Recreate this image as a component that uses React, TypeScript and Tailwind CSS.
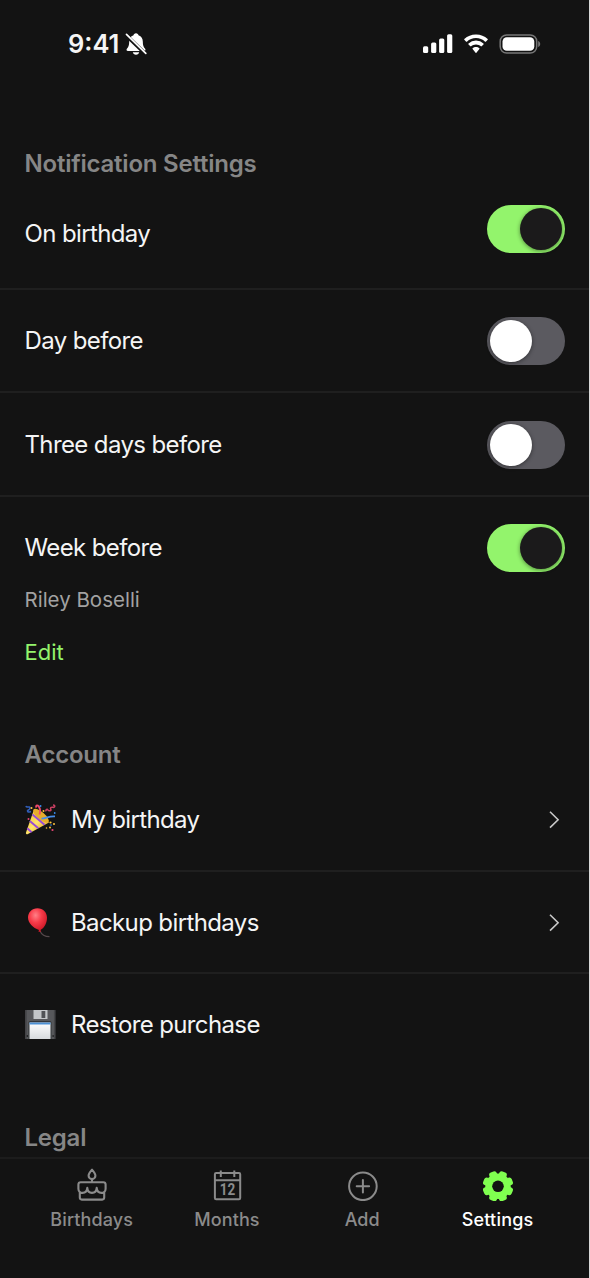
import { useState } from "react";
import type { ReactNode } from "react";

function StatusBar() {
  return (
    <header className="flex h-[88px] shrink-0 items-center justify-between pl-[68px] pr-[48px]">
      <div className="flex items-center gap-[4px]">
        <span className="w-[53px] whitespace-nowrap text-[25.500px] leading-[30px] font-semibold">9:41</span>
        <svg width="22" height="24" viewBox="0 0 22 24">
          <path d="M11 1.200c-1.500 0-2.300 1-2.500 2C5.500 4.200 4.200 6.500 4.200 9.500c0 4-.8 5.600-2.300 7.200-.8.900-.3 2.300 1 2.300h16.200c1.300 0 1.800-1.400 1-2.300-1.500-1.600-2.300-3.200-2.300-7.200 0-3-1.300-5.300-4.300-6.300-.2-1-1-2-2.500-2zM7.800 20.300h6.400c-.3 1.500-1.500 2.500-3.200 2.500s-2.900-1-3.200-2.500z" fill="#fff" />
          <path d="M1 3 20.500 22" stroke="#131313" strokeWidth="3.800" />
          <path d="M1.500 2.300 20.800 21.300" stroke="#fff" strokeWidth="1.700" strokeLinecap="round" />
        </svg>
      </div>
      <div className="flex items-center">
        <svg width="30" height="20" viewBox="0 0 30 20" fill="#fff">
          <rect x="0" y="12.200" width="5.200" height="6.800" rx="1.500" />
          <rect x="8.100" y="8.500" width="5.200" height="10.500" rx="1.500" />
          <rect x="16.100" y="4.500" width="5.200" height="14.500" rx="1.500" />
          <rect x="24.100" y="0.300" width="5.200" height="18.700" rx="1.500" />
        </svg>
        <svg className="ml-[10px]" width="26" height="20" viewBox="0 0 26 20" fill="#fff">
          <path d="M13 4.100c3.500 0 6.700 1.300 9.100 3.600.2.200.5.200.7 0l1.900-1.900c.2-.2.200-.6 0-.8A17 17 0 0 0 13 .5 17 17 0 0 0 1.300 5c-.2.200-.2.600 0 .8l1.900 1.900c.2.200.5.200.7 0A13.200 13.200 0 0 1 13 4.100z" />
          <path d="M13 10.400c1.900 0 3.600.7 4.900 1.900.2.200.5.200.7 0l1.900-1.900c.2-.2.200-.6 0-.8a10.900 10.900 0 0 0-15 0c-.2.200-.2.600 0 .8l1.900 1.900c.2.200.5.200.7 0 1.300-1.200 3-1.900 4.900-1.900z" />
          <path d="M13 12.900c-1.300 0-2.500.5-3.400 1.300-.2.200-.2.500 0 .700l3 3.900c.2.300.6.300.8 0l3-3.900c.2-.2.200-.5 0-.7-.9-.8-2.100-1.300-3.400-1.300z" />
        </svg>
        <svg className="ml-[10px]" width="42" height="20" viewBox="0 0 42 20">
          <rect x="1.200" y=".9" width="36.500" height="18.200" rx="6.500" fill="none" stroke="#777" strokeWidth="1.500" />
          <rect x="3.500" y="3.200" width="31.800" height="13.600" rx="4.300" fill="#fff" />
          <path d="M39.200 7v6c1.300-.5 2-1.600 2-3s-.7-2.500-2-3z" fill="#777" />
        </svg>
      </div>
    </header>
  );
}

function Switch({ label, initial }: { label: string; initial: boolean }) {
  const [on, setOn] = useState(initial);
  return (
    <button
      role="switch"
      aria-checked={on}
      aria-label={label}
      onClick={() => setOn(!on)}
      className={`flex h-[48px] w-[78px] items-center rounded-full px-[3px] ${on ? "justify-end bg-[#93f46c]" : "justify-start bg-[#5b5a60]"}`}
    >
      <span
        className={`size-[42px] rounded-full shadow-[0_1px_4px_rgba(0,0,0,0.45)] ${on ? "bg-[#1b1a1b]" : "bg-white"}`}
      />
    </button>
  );
}

function Heading({ children }: { children: ReactNode }) {
  return (
    <h2 className="px-[24.500px] text-[24px] leading-[32px] font-semibold tracking-[-0.22px] text-[#868686]">{children}</h2>
  );
}

function RowLabel({ children }: { children: ReactNode }) {
  return <span className="block text-[24px] leading-[30px] tracking-[-0.62px]">{children}</span>;
}

function AccountRow({ icon, label, arrow }: { icon: ReactNode; label: string; arrow?: boolean }) {
  return (
    <div className="flex items-center pr-[29px] pl-[24px]">
      <span className="flex h-[34px] w-[47px] items-center">{icon}</span>
      <RowLabel>{label}</RowLabel>
      {arrow && (
        <svg className="ml-auto" width="12" height="20" viewBox="0 0 12 20" fill="none">
          <path d="M2 1.800 10.100 9.700 2 17.600" stroke="#c8c8c8" strokeWidth="1.600" />
        </svg>
      )}
    </div>
  );
}

const Popper = () => (
  <svg width="33" height="34" viewBox="0 0 33 34">
    <defs>
      <linearGradient id="cone" x1="0" y1="0" x2="1" y2="1">
        <stop offset="0" stopColor="#f2b72c" />
        <stop offset=".5" stopColor="#ffe46a" />
        <stop offset="1" stopColor="#d48a18" />
      </linearGradient>
    </defs>
    <path d="M10 6.500 2 29.500c-.4 1.500.8 2.100 2 1.600l21-11.600z" fill="url(#cone)" />
    <ellipse cx="17" cy="12.800" rx="3.800" ry="9.800" transform="rotate(-49 17 12.800)" fill="#e6ac2b" />
    <path d="m8.500 11.500 12 10.300M5.800 18l8.500 7.200M3.300 25.200l4.300 4" stroke="#984bd5" strokeWidth="1.900" />
    <path d="M15.500 11.500c1-3.500.8-7-1.700-9-1.600-.7-2.300 1-1.200 2" stroke="#f0486c" strokeWidth="1.800" fill="none" />
    <path d="M17.500 15.700c4.500-.2 7-2.700 13.500-2.300" stroke="#478de9" strokeWidth="1.800" fill="none" />
    <path d="M2 3c.4 2.500 4-.5 4 2s-3.500 1.500-2.200 3.600c1 1 2 .2 3.200-.2" stroke="#315fba" strokeWidth="1.600" fill="none" />
    <path d="M29 2c2.500 0 2 2.700 0 2.300s-3 .3-2.200 2-2 2-3 .6-2.300 0-1.700 1.500" stroke="#ca3f62" strokeWidth="1.600" fill="none" />
    <g fill="#ffc43e">
      <circle cx="7.500" cy="5" r="1" /><circle cx="19.500" cy="8" r="1" /><circle cx="26.500" cy="19.500" r="1.100" /><circle cx="30" cy="21" r="1" /><circle cx="26" cy="24.500" r="1" /><circle cx="22.500" cy="25" r=".8" />
    </g>
    <g fill="#368bf0"><circle cx="16.500" cy="3" r="1" /><circle cx="30.700" cy="10" r=".9" /><circle cx="27" cy="22" r=".8" /></g>
    <g fill="#e64473"><circle cx="4.500" cy="16" r="1" /><circle cx="28.500" cy="27" r="1.100" /></g>
  </svg>
);

const Balloon = () => (
  <svg width="33" height="34" viewBox="0 0 33 34">
    <defs>
      <radialGradient id="balloon" cx=".4" cy=".3" r=".7">
        <stop offset="0" stopColor="#ff8087" />
        <stop offset=".45" stopColor="#f83b49" />
        <stop offset="1" stopColor="#cc1726" />
      </radialGradient>
    </defs>
    <path d="M16 25c1.500 3.500 5 5.700 9.500 5.700" fill="none" stroke="#54494b" strokeWidth="1.200" />
    <path d="M13.500 2.300C8 2.300 4 6.400 4 11.600c0 5.300 5 10.500 11 12.500l-.6 1.600h2.700l-.6-1.800C20.500 21.900 23 16.700 23 11.700 23 6.300 19 2.300 13.500 2.300z" fill="url(#balloon)" />
  </svg>
);

const Floppy = () => (
  <svg width="33" height="34" viewBox="0 0 33 34">
    <defs>
      <linearGradient id="paper" x1="0" y1="0" x2="0" y2="1">
        <stop offset="0" stopColor="#fff" />
        <stop offset="1" stopColor="#d8dbde" />
      </linearGradient>
    </defs>
    <path d="M1.300 2h30v29H1.300z" fill="#57585b" />
    <path d="M2 2v29M30.600 2v29" stroke="#444548" strokeWidth="1.400" />
    <path d="M9.500 2h14v9h-14z" fill="#c3c6c8" />
    <path d="M17.500 3h3.800v7h-3.800z" fill="#505255" />
    <path d="M4.500 31V14.500q0-1.500 1.500-1.500h20q1.500 0 1.500 1.500V31z" fill="#333639" />
    <path d="M5.500 14.500h21V31h-21z" fill="url(#paper)" />
    <path d="M5.500 14.500h21v2h-21z" fill="#4c91d4" />
    <path d="M2.700 27H4v2H2.700zM28.500 27h1.300v2h-1.300z" fill="#242526" />
  </svg>
);

const CakeIcon = () => (
  <svg width="32" height="34" viewBox="0 0 32 34" fill="none" stroke="currentColor" strokeWidth="2.100" strokeLinejoin="round">
    <path d="M16 2.700c-2 2.200-3.400 3.800-3.400 6a3.400 3.400 0 0 0 6.800 0c0-2.200-1.400-3.800-3.400-6zM16 12v3" />
    <path d="M2.400 21.700v-4.200q0-2.300 2.300-2.300h22.600q2.300 0 2.300 2.300v4.200c0 2.300-1.700 4.200-4.200 4.200s-4.400-1.700-4.700-5c-.2 3.300-2.200 5-4.700 5s-4.500-1.700-4.700-5c-.3 3.300-2.200 5-4.700 5s-4.200-1.900-4.200-4.200zM3.800 25v5.600q0 2 2 2h20.400q2 0 2-2V25" />
  </svg>
);

const CalendarIcon = () => (
  <svg width="32" height="34" viewBox="0 0 32 34" fill="none" stroke="currentColor" strokeWidth="2">
    <rect x="3.900" y="6" width="25.300" height="26.300" rx="1.200" />
    <path d="M3.900 13.300h25.300M9.800 3.400V10M23.300 3.400V10" />
    <text x="16.600" y="28" textAnchor="middle" fill="currentColor" stroke="none" fontSize="16" fontWeight="700" fontFamily="Roboto, sans-serif" textLength="15.500" lengthAdjust="spacingAndGlyphs">12</text>
  </svg>
);

const AddIcon = () => (
  <svg width="32" height="34" viewBox="0 0 32 34" fill="none" stroke="currentColor" strokeWidth="2">
    <circle cx="16.900" cy="19.300" r="13.800" />
    <path d="M10.700 19.300h12.400M16.900 13.100v12.400" strokeLinecap="round" />
  </svg>
);

const GearIcon = () => (
  <svg width="32" height="34" viewBox="0 0 32 34" fill="#80ff50">
    <defs>
      <mask id="gear-hole">
        <path fill="#fff" d="M0 0h34v36H0z" />
        <circle cx="16" cy="19.300" r="5.800" fill="#000" />
      </mask>
    </defs>
    <g mask="url(#gear-hole)">
      <circle cx="16" cy="19.300" r="12.700" />
      {[22.5, 67.5, 112.5, 157.5, 202.5, 247.5, 292.5, 337.5].map((a) => (
        <rect key={a} x="12" y="3.900" width="8" height="9" rx="2.600" transform={`rotate(${a} 16 19.300)`} />
      ))}
    </g>
  </svg>
);

function Tab({ icon, label, active }: { icon: ReactNode; label: string; active?: boolean }) {
  return (
    <button className={`flex w-[135.300px] flex-col items-center ${active ? "text-white" : "text-[#8b8b8b]"}`}>
      {icon}
      <span className={`mt-[7px] text-[18px] leading-[24px] font-medium ${active ? "tracking-[0.2px]" : "tracking-[0.1px]"}`}>{label}</span>
    </button>
  );
}

export default function App() {
  return (
    <div className="flex h-[1278px] w-[590px] flex-col overflow-hidden border-r border-[#d8d8d8] bg-[#131313] font-['Inter','Liberation_Sans',sans-serif] text-[#f5f5f5]">
      <StatusBar />
      <main className="h-[1069px] shrink-0 overflow-hidden pt-[60px]">
        <Heading>Notification Settings</Heading>
        <div className="flex h-[110px] justify-between border-b-2 border-[#1f1f1f] pt-[24.500px] pr-[24px] pl-[24.500px]">
          <div className="pt-[14px]"><RowLabel>On birthday</RowLabel></div>
          <Switch label="On birthday" initial />
        </div>
        <div className="flex h-[103px] items-center justify-between border-b-2 border-[#1f1f1f] pt-px pr-[24px] pl-[24.500px]">
          <RowLabel>Day before</RowLabel>
          <Switch label="Day before" initial={false} />
        </div>
        <div className="flex h-[104px] items-center justify-between border-b-2 border-[#1f1f1f] pt-px pr-[24px] pl-[24.500px]">
          <RowLabel>Three days before</RowLabel>
          <Switch label="Three days before" initial={false} />
        </div>
        <div className="flex h-[242px] flex-col pt-[27px] pr-[24px] pl-[24.500px]">
          <div className="flex h-[48px] items-center justify-between">
            <RowLabel>Week before</RowLabel>
            <Switch label="Week before" initial />
          </div>
          <span className="mt-[15px] text-[20.500px] leading-[26px] text-[#a2a2a2]">Riley Boselli</span>
          <button className="mt-[25px] self-start text-[22px] leading-[28px] text-[#93f46c]">Edit</button>
        </div>
        <Heading>Account</Heading>
        <div className="h-[101px] border-b-2 border-[#1f1f1f] pt-[32px]">
          <AccountRow icon={<Popper />} label="My birthday" arrow />
        </div>
        <div className="h-[102px] border-b-2 border-[#1f1f1f] pt-[34px]">
          <AccountRow icon={<Balloon />} label="Backup birthdays" arrow />
        </div>
        <div className="h-[148px] pt-[34px]">
          <AccountRow icon={<Floppy />} label="Restore purchase" />
        </div>
        <Heading>Legal</Heading>
      </main>
      <nav className="flex h-[121px] shrink-0 items-start border-t-2 border-[#1c1c1c] pt-[8px] pl-[24px]">
        <Tab icon={<CakeIcon />} label="Birthdays" />
        <Tab icon={<CalendarIcon />} label="Months" />
        <Tab icon={<AddIcon />} label="Add" />
        <Tab icon={<GearIcon />} label="Settings" active />
      </nav>
    </div>
  );
}
